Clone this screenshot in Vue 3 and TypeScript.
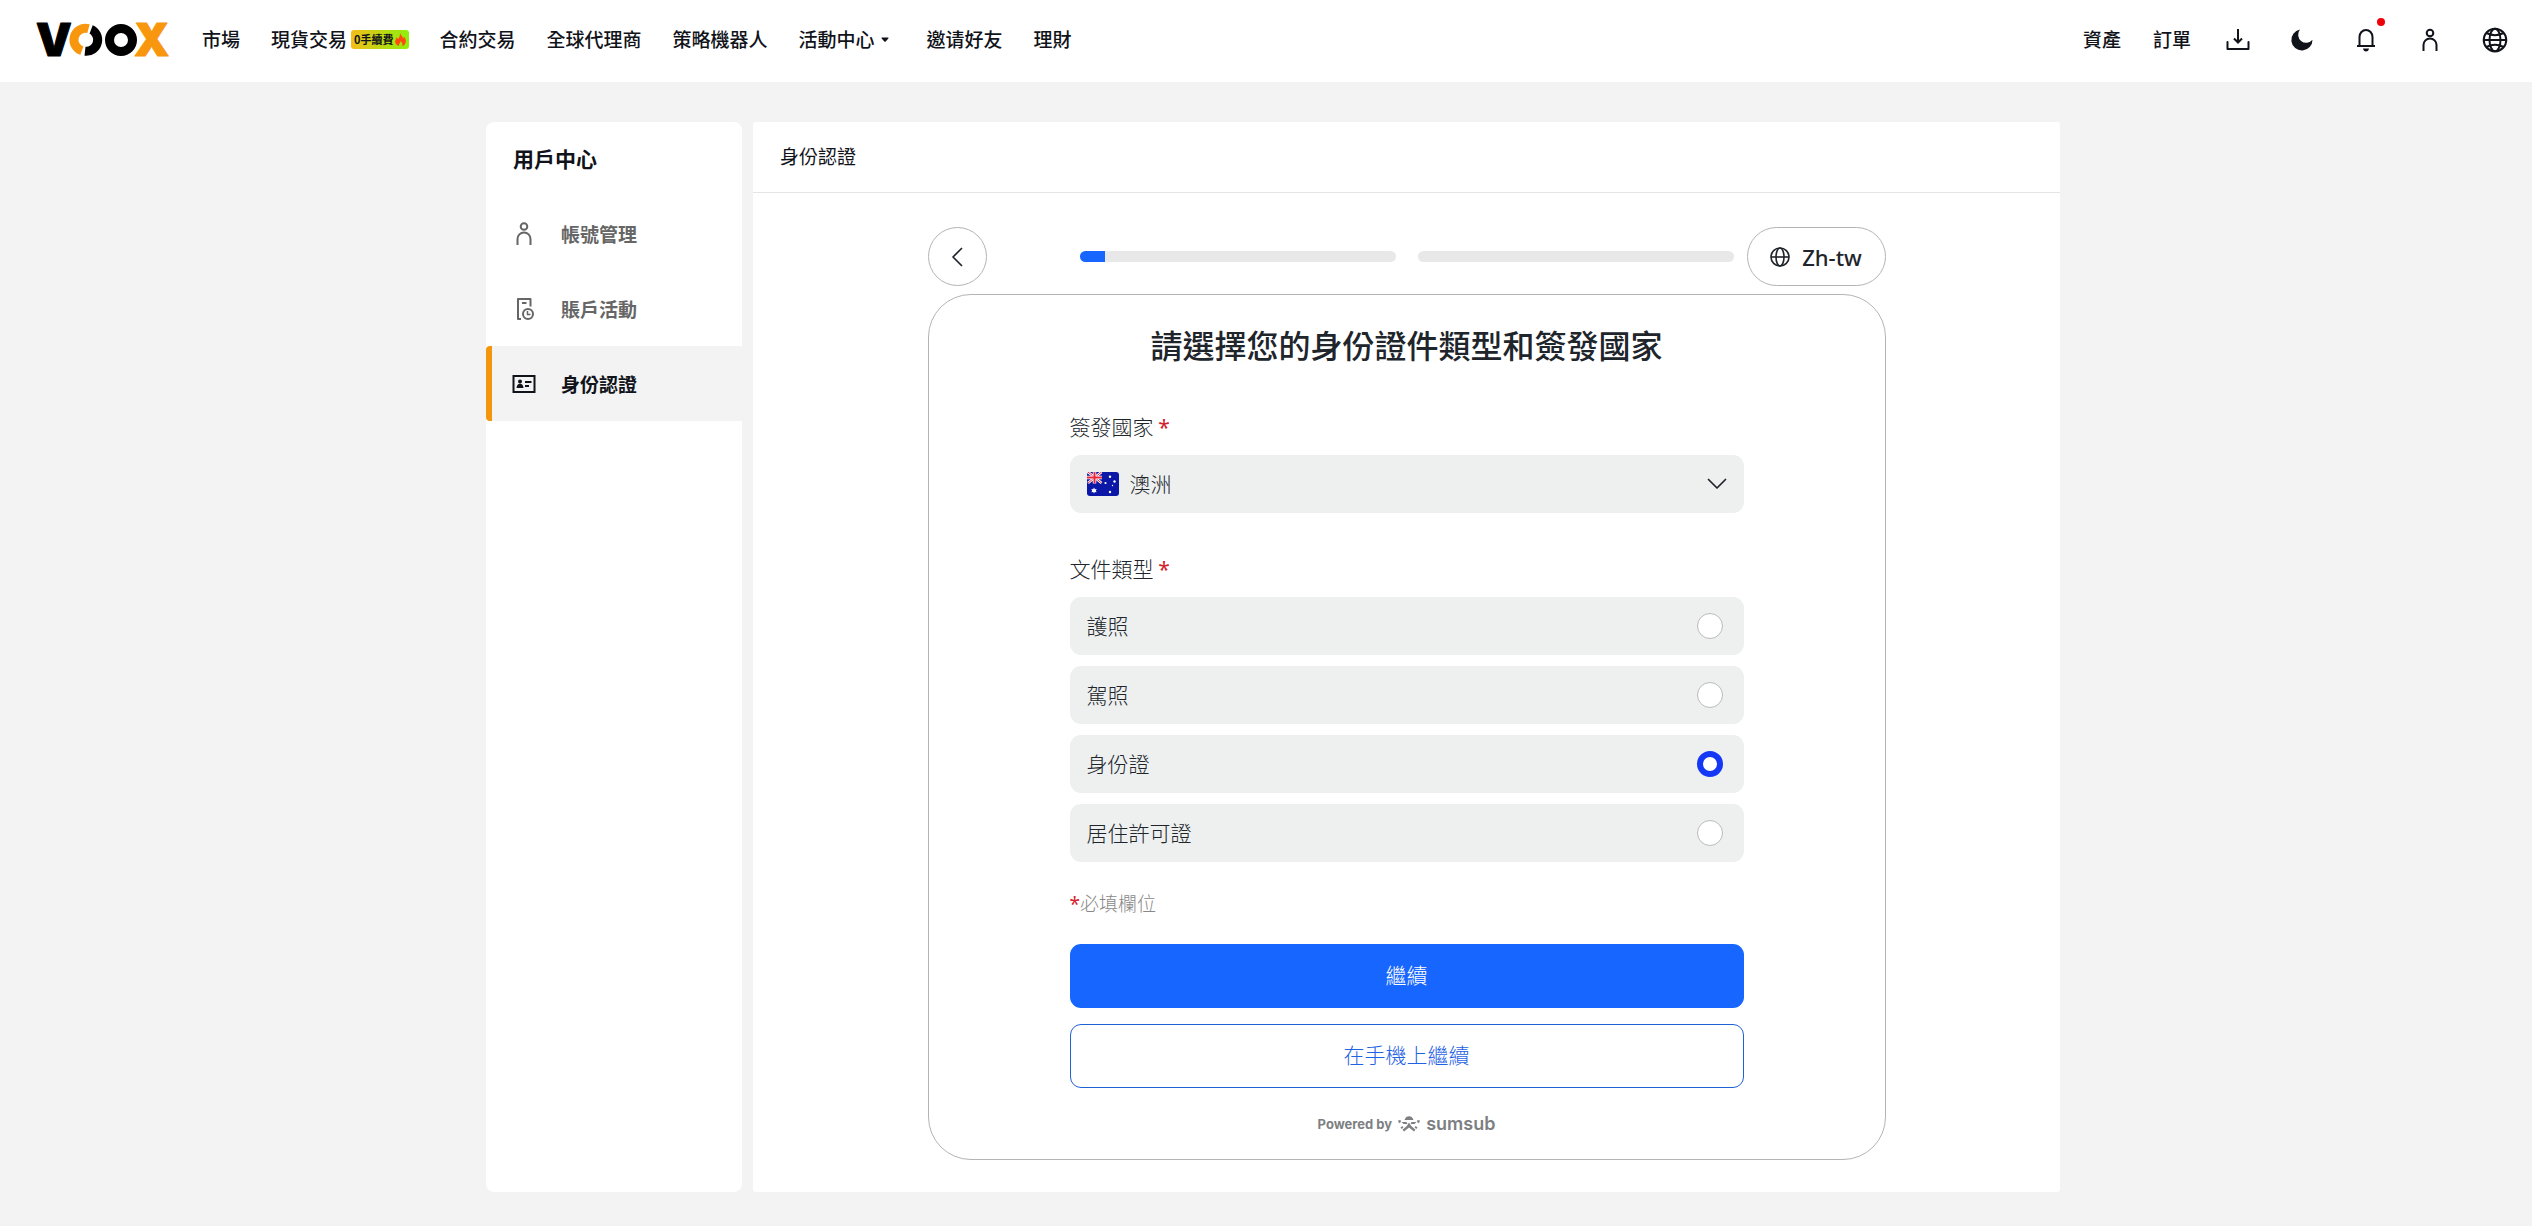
<script setup lang="ts">
import { ref } from 'vue'

interface DocumentType {
  value: string
  label: string
}

const documentTypes: DocumentType[] = [
  { value: 'passport', label: '護照' },
  { value: 'driver', label: '駕照' },
  { value: 'id', label: '身份證' },
  { value: 'residence', label: '居住許可證' },
]

const selectedType = ref('id')
const country = ref('au')
const progress = [8, 0]
</script>

<template>
  <div class="page">
    <header class="topbar">
      <a class="logo" href="#" aria-label="VOOX">
        <svg width="136" height="64" viewBox="0 -15 136 64">
          <g class="logo-letter" stroke-linejoin="round">
            <text x="0" y="33" fill="#000" stroke="#000">V</text>
            <text x="98" y="33" fill="#f8970e" stroke="#f8970e">X</text>
          </g>
          <g fill="none" stroke-width="9">
            <circle cx="85" cy="17" r="11.5" stroke="#000" />
            <path d="M46.5 28 A11.5 11.5 0 0 1 52.5 5.7" stroke="#f8970e" />
            <path d="M54.5 6.2 A11.5 11.5 0 0 1 49 28.3" stroke="#000" />
          </g>
          <path d="M56.5 0 L52 12 M49 22 L44.5 34" stroke="#fff" stroke-width="2" />
        </svg>
      </a>
      <nav class="nav">
        <a href="#">市場</a>
        <a href="#" class="with-badge">現貨交易
          <span class="badge">0手續費
            <svg width="11" height="13" viewBox="0 0 11 13">
              <path d="M5 0 C6 2.5 8 3.5 8 5.5 C8.7 5 8.8 4.3 8.8 3.6 C10.3 5.3 11 7 10.8 8.8 C10.5 11.3 8.7 13 7.2 13 C8 11 7 9.5 5.6 8 C5.5 9.7 3.6 10.5 4 13 C1.5 12.4 .2 10.7 .2 8.5 C.2 6.5 1.3 5.6 1.8 4.2 C2.5 4.8 2.8 5.5 2.8 6.2 C4.5 4.7 5.2 2.5 5 0Z" fill="#ff4b12" />
            </svg>
          </span>
        </a>
        <a href="#">合約交易</a>
        <a href="#">全球代理商</a>
        <a href="#">策略機器人</a>
        <button type="button" class="nav-menu">活動中心
          <svg width="8" height="5" viewBox="0 0 8 5"><path d="M1 .5H7Q8 .8 7.3 1.6L4.7 4.5Q4 5.2 3.3 4.5L.7 1.6Q0 .8 1 .5Z" fill="#11131a" /></svg>
        </button>
        <a href="#">邀请好友</a>
        <a href="#">理財</a>
      </nav>
      <div class="tools">
        <a href="#" class="tool-link">資產</a>
        <a href="#" class="tool-link">訂單</a>
        <button type="button" aria-label="下載">
          <svg width="24" height="24" viewBox="0 0 24 24" fill="none" stroke="#11131a" stroke-width="2">
            <path d="M1.5 14V21H22.5V14" stroke-linejoin="round" stroke-linecap="round" />
            <path d="M12 1V14M8 10.5L12 14.5L16 10.5" />
          </svg>
        </button>
        <button type="button" aria-label="深色模式">
          <svg width="24" height="24" viewBox="0 0 24 24"><path d="M10 1.5A7.8 7.8 0 0 0 22.5 11.8A10.6 10.6 0 1 1 10 1.5Z" fill="#11131a" /></svg>
        </button>
        <button type="button" aria-label="通知" class="bell">
          <svg width="24" height="24" viewBox="0 0 24 24" fill="none" stroke="#11131a" stroke-width="2">
            <path d="M5.5 18V9A6.5 7 0 0 1 18.5 9V18M3 18H21" />
            <path d="M9 20.5H15Q14.5 23.5 12 23.5Q9.5 23.5 9 20.5Z" fill="#11131a" stroke="none" />
          </svg>
          <span class="dot"></span>
        </button>
        <button type="button" aria-label="用戶">
          <svg width="24" height="24" viewBox="0 0 24 24" fill="none" stroke="#11131a" stroke-width="2">
            <circle cx="12" cy="5" r="3.3" /><path d="M5.5 23V17A6.5 6.5 0 0 1 18.5 17V23" />
          </svg>
        </button>
        <button type="button" aria-label="語言">
          <svg width="26" height="26" viewBox="0 0 26 26" fill="none" stroke="#11131a" stroke-width="2">
            <circle cx="13" cy="13" r="11.3" /><ellipse cx="13" cy="13" rx="5.5" ry="11.3" />
            <path d="M2 13H24M4.5 6Q13 10.5 21.5 6M4.5 20Q13 15.5 21.5 20" />
          </svg>
        </button>
      </div>
    </header>

    <div class="layout">
      <aside class="sidebar">
        <h2>用戶中心</h2>
        <a href="#" class="side-item">
          <svg width="24" height="24" viewBox="0 0 24 24" fill="none" stroke="#666" stroke-width="2">
            <circle cx="12" cy="4.5" r="3.3" /><path d="M5.5 23V17A6.5 6.5 0 0 1 18.5 17V23" />
          </svg>
          帳號管理
        </a>
        <a href="#" class="side-item">
          <svg width="24" height="24" viewBox="0 0 24 24" fill="none" stroke="#666" stroke-width="2">
            <path d="M9 22H6V2H18.5V9.5M10 6H14.5" stroke-linejoin="round" /><circle cx="16" cy="17" r="5" /><path d="M15.5 14V17.5H18.5" stroke-width="1.5" />
          </svg>
          賬戶活動
        </a>
        <a href="#" class="side-item active">
          <svg width="24" height="24" viewBox="0 0 24 24" fill="#11131a">
            <rect x="1.500" y="4" width="21" height="16" fill="none" stroke="#11131a" stroke-width="2" />
            <circle cx="8" cy="9.5" r="2" /><path d="M4.5 16Q5 11.8 8 11.8Q11 11.8 11.5 16Z" />
            <path d="M13 9H19.5V11H13ZM13 13H17V15H13Z" />
          </svg>
          身份認證
        </a>
      </aside>

      <main class="panel">
        <h1 class="panel-title">身份認證</h1>
        <div class="verify">
          <div class="verify-bar">
            <button type="button" class="back" aria-label="返回">
              <svg width="12" height="20" viewBox="0 0 12 20" fill="none" stroke="#20252b" stroke-width="1.7"><path d="M10.5 1.5L2 10L10.5 18.5" stroke-linecap="round" stroke-linejoin="round" /></svg>
            </button>
            <div class="steps">
              <div v-for="(value, index) in progress" :key="index" class="step">
                <div class="step-fill" :style="{ width: value + '%' }"></div>
              </div>
            </div>
            <button type="button" class="lang">
              <svg width="20" height="20" viewBox="0 0 20 20" fill="none" stroke="#20252b" stroke-width="1.6">
                <circle cx="10" cy="10" r="9" /><ellipse cx="10" cy="10" rx="4" ry="9" /><path d="M1 10H19" />
              </svg>
              Zh-tw
            </button>
          </div>

          <form class="card" @submit.prevent>
            <h2 class="card-title">請選擇您的身份證件類型和簽發國家</h2>
            <div class="form">
              <label class="label" for="country">簽發國家 <span class="required">*</span></label>
              <div class="select-wrap">
                <select id="country" v-model="country">
                  <option value="au">澳洲</option>
                </select>
                <svg class="flag" width="32" height="24" viewBox="0 0 32 24">
                  <rect width="32" height="24" rx="3" fill="#0a17a7" />
                  <path d="M1 0L14.5 11M14.5 0L1 11" stroke="#fff" stroke-width="2.5" />
                  <path d="M1 0L14.5 11M14.5 0L1 11" stroke="#e6273e" stroke-width="1" />
                  <path d="M7.5 0V11.5M0 5.5H15" stroke="#fff" stroke-width="3.5" />
                  <path d="M7.5 0V11.5M0 5.5H15" stroke="#e6273e" stroke-width="2" />
                  <g fill="#fff">
                    <path d="M7 15.5L7.9 17.2L9.8 17L8.8 18.6L9.6 20.2L7.8 20L7 21.5L6.2 20L4.4 20.2L5.2 18.6L4.2 17L6.1 17.2Z" />
                    <circle cx="23" cy="4.8" r="1.2" /><circle cx="18.5" cy="11" r="1.1" /><circle cx="27.5" cy="9.5" r="1.2" />
                    <circle cx="25.5" cy="13.5" r=".7" /><circle cx="23" cy="20" r="1.2" />
                  </g>
                </svg>
                <svg class="chevron" width="20" height="12" viewBox="0 0 20 12" fill="none" stroke="#20252b" stroke-width="1.7"><path d="M1.5 1.5L10 10L18.5 1.5" stroke-linecap="round" stroke-linejoin="round" /></svg>
              </div>

              <fieldset>
                <legend class="label">文件類型 <span class="required">*</span></legend>
                <div class="options">
                  <label v-for="type in documentTypes" :key="type.value" class="option">
                    <span class="option-text">{{ type.label }}</span>
                    <input v-model="selectedType" type="radio" name="document-type" :value="type.value">
                  </label>
                </div>
              </fieldset>

              <p class="note"><span class="required">*</span>必填欄位</p>
              <button type="submit" class="btn primary">繼續</button>
              <button type="button" class="btn outline">在手機上繼續</button>
            </div>
            <div class="powered">
              <span>Powered by</span>
              <svg width="22" height="16" viewBox="0 0 22 16" fill="#7d7f82">
                <path d="M6.5 4Q7.5 .2 11 .2Q14.5 .2 15.5 4Z" />
                <path d="M0 4.5L2.5 4L3 6L1 7.2ZM22 4.5L19.5 4L19 6L21 7.2Z" />
                <path d="M3.500 6H8.500L9.500 8H5.500ZM18.500 6H13.500L12.500 8H16.500Z" />
                <path d="M11 6.5L13.2 10L17.500 13.800L16 15.500L11 11.500L6 15.500L4.500 13.800L8.800 10Z" />
                <path d="M2.500 11L5 10.200L5.300 11.700L3.500 13ZM19.500 11L17 10.200L16.700 11.700L18.500 13Z" />
              </svg>
              <span class="sumsub">sumsub</span>
            </div>
          </form>
        </div>
      </main>
    </div>
  </div>
</template>

<style>
body {
  margin: 0;
  background: #f3f3f3;
}
</style>

<style scoped>
* {
  box-sizing: border-box;
}

.page {
  min-height: 100vh;
  padding-bottom: 32px;
  background: #f3f3f3;
  color: #11131a;
  font-family: "Noto Sans CJK TC", "Noto Sans", sans-serif;
  font-size: 19px;
  line-height: 28px;
}

a {
  color: inherit;
  text-decoration: none;
}

button {
  padding: 0;
  border: 0;
  background: none;
  color: inherit;
  font: inherit;
  cursor: pointer;
}

svg {
  display: block;
  flex: none;
}

.topbar {
  display: flex;
  align-items: center;
  height: 82px;
  padding: 0 24px 2px 36px;
  background: #fff;
}

.logo-letter {
  font-family: Inter, sans-serif;
  font-size: 45px;
  font-weight: 900;
  stroke-width: 1px;
}

.nav {
  display: flex;
  align-items: center;
  gap: 31px;
  margin-left: 30px;
  padding-bottom: 2px;
  font-weight: 500;
  white-space: nowrap;
}

.with-badge,
.nav-menu {
  display: flex;
  align-items: center;
  gap: 4px;
}

.nav-menu {
  gap: 6px;
  margin-right: 7px;
}

.badge {
  display: flex;
  align-items: center;
  gap: 1px;
  height: 19px;
  padding: 0 3px;
  border-radius: 3px;
  background: linear-gradient(90deg, #f3bd18, #8ef00c);
  font-size: 11px;
  font-weight: 700;
}

.tools {
  display: flex;
  align-items: center;
  gap: 40px;
  margin-left: auto;
  white-space: nowrap;
}

.tool-link {
  margin-right: -8px;
  padding-bottom: 2px;
  font-weight: 500;
}

.tool-link + button {
  margin-left: 3px;
}

.bell {
  position: relative;
}

.dot {
  position: absolute;
  top: -10px;
  right: -7px;
  width: 8px;
  height: 8px;
  border-radius: 50%;
  background: #f00008;
}

.layout {
  display: flex;
  gap: 11px;
  width: 63%;
  max-width: 1588px;
  margin: 40px auto 0;
  padding-left: 14px;
}

.sidebar {
  flex: none;
  width: 256px;
  border-radius: 8px;
  background: #fff;
}

.sidebar h2 {
  margin: 0;
  padding: 22px 27px 24px;
  font-size: 21px;
  font-weight: 700;
}

.side-item {
  display: flex;
  align-items: center;
  gap: 25px;
  height: 75px;
  padding-left: 26px;
  color: #666;
  font-weight: 700;
}

.side-item.active {
  padding-left: 20px;
  border-left: 6px solid #f3960c;
  border-radius: 4px 0 0 4px;
  background: #f3f3f3;
  color: #11131a;
}

.panel {
  flex: 1;
  min-width: 0;
  border-radius: 3px;
  background: #fff;
}

.panel-title {
  margin: 0;
  padding: 20px 27px 22px;
  border-bottom: 1px solid #e5e5e5;
  font-size: 19px;
  font-weight: 400;
}

.verify {
  max-width: 958px;
  margin: 0 auto;
  padding: 34px 0 32px;
  color: #20252b;
}

.verify-bar {
  display: flex;
  align-items: center;
  margin-bottom: 8px;
}

.back,
.lang {
  display: flex;
  align-items: center;
  justify-content: center;
  height: 59px;
  border: 1px solid #b4b4b4;
  border-radius: 30px;
}

.back {
  width: 59px;
}

.lang {
  gap: 12px;
  width: 139px;
  font-family: "Noto Sans", sans-serif;
  font-size: 22px;
  font-weight: 500;
}

.steps {
  display: flex;
  flex: 1;
  gap: 22px;
  margin: 0 13px 0 93px;
}

.step {
  flex: 1;
  height: 11px;
  overflow: hidden;
  border-radius: 6px;
  background: #e8e8e8;
}

.step-fill {
  height: 100%;
  background: #1766ff;
}

.card {
  padding: 25px 24px 23px;
  border: 1px solid #b4b4b4;
  border-radius: 43px;
  font-size: 21px;
  font-weight: 300;
}

.card-title {
  margin: 0 0 44px;
  font-size: 32px;
  font-weight: 500;
  line-height: 48px;
  text-align: center;
}

.form {
  max-width: 674px;
  margin: 0 auto;
}

.label {
  display: block;
  margin-bottom: 15px;
  padding: 0;
}

.required {
  color: #d3202c;
  font-family: "Noto Sans", sans-serif;
  font-weight: 400;
  line-height: 1;
}

.select-wrap {
  position: relative;
  margin-bottom: 41px;
}

.select-wrap select {
  display: block;
  width: 100%;
  height: 58px;
  padding: 0 60px 3px;
  border: 0;
  border-radius: 11px;
  appearance: none;
  background: #eef0f0;
  color: inherit;
  font: inherit;
}

.flag,
.chevron {
  position: absolute;
  top: 17px;
  left: 17px;
  pointer-events: none;
}

.chevron {
  top: 23px;
  right: 17px;
  left: auto;
}

fieldset {
  margin: 0;
  padding: 0;
  border: 0;
}

.options {
  display: grid;
  gap: 11px;
}

.option {
  display: flex;
  align-items: center;
  justify-content: space-between;
  height: 58px;
  padding: 0 21px 0 17px;
  border-radius: 11px;
  background: #eef0f0;
}

.option-text {
  padding-bottom: 3px;
}

.option input {
  width: 26px;
  height: 26px;
  margin: 0;
  border: 1px solid #bbb;
  border-radius: 50%;
  appearance: none;
  background: #fff;
}

.option input:checked {
  border: 6px solid #1438f5;
}

.note {
  margin: 27px 0;
  color: #888;
  font-size: 19px;
}

.btn {
  display: block;
  width: 100%;
  height: 64px;
  padding-bottom: 4px;
  border-radius: 11px;
}

.primary {
  background: #1766ff;
  color: #fff;
}

.outline {
  margin-top: 16px;
  border: 1px solid #1f62d4;
  color: #1f62e4;
}

.powered {
  display: flex;
  align-items: center;
  justify-content: center;
  gap: 6px;
  margin-top: 24px;
  color: #7d7f82;
  font-family: Inter, sans-serif;
  font-size: 13px;
  font-weight: 700;
  line-height: 24px;
}

.sumsub {
  font-size: 18px;
  font-weight: 600;
}
</style>
